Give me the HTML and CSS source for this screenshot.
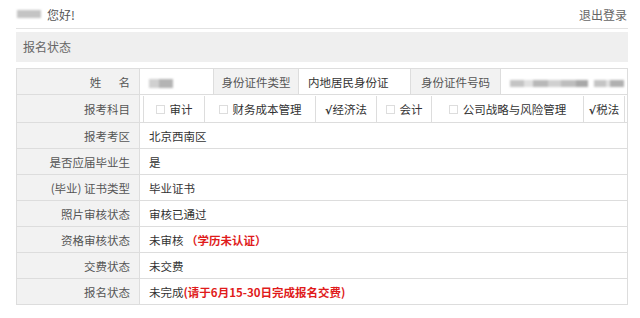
FILE: index.html
```html
<!DOCTYPE html>
<html lang="zh-CN">
<head>
    <meta charset="UTF-8">
    <meta name="viewport" content="width=device-width, initial-scale=1.0">
    <title>报名状态</title>
    <link rel="stylesheet" href="styles.css">
</head>
<body>
   <div class="page">
      <div class="top-bar">
         <div class="greet"><span class="blur-name"></span>您好!</div>
         <a class="logout" href="#">退出登录</a>
      </div>
      <div class="section-title">报名状态</div>
      <table class="info">
         <colgroup>
            <col style="width:123px">
            <col style="width:74px">
            <col style="width:85px">
            <col style="width:112px">
            <col style="width:90px">
            <col>
         </colgroup>
         <tr>
            <th>姓&emsp;&ensp;名</th>
            <td><span class="blur-small"></span></td>
            <th class="mid">身份证件类型</th>
            <td>内地居民身份证</td>
            <th class="mid">身份证件号码</th>
            <td><span class="blur-id"></span></td>
         </tr>
         <tr class="subjects-row">
            <th>报考科目</th>
            <td colspan="5" class="subjects-cell">
               <table class="subjects">
                  <tr>
                     <td style="width:60px"><span class="box"></span>审计</td>
                     <td style="width:110px"><span class="box"></span>财务成本管理</td>
                     <td style="width:60px"><span class="tick">√</span>经济法</td>
                     <td style="width:54px"><span class="box"></span>会计</td>
                     <td style="width:151px"><span class="box"></span>公司战略与风险管理</td>
                     <td><span class="tick">√</span>税法</td>
                  </tr>
               </table>
            </td>
         </tr>
         <tr>
            <th>报考考区</th>
            <td colspan="5">北京西南区</td>
         </tr>
         <tr>
            <th>是否应届毕业生</th>
            <td colspan="5">是</td>
         </tr>
         <tr>
            <th>(毕业) 证书类型</th>
            <td colspan="5">毕业证书</td>
         </tr>
         <tr>
            <th>照片审核状态</th>
            <td colspan="5">审核已通过</td>
         </tr>
         <tr>
            <th>资格审核状态</th>
            <td colspan="5">未审核 <span class="warn">（学历未认证）</span></td>
         </tr>
         <tr>
            <th>交费状态</th>
            <td colspan="5">未交费</td>
         </tr>
         <tr>
            <th>报名状态</th>
            <td colspan="5">未完成<span class="warn">(请于6月15-30日完成报名交费)</span></td>
         </tr>
      </table>
   </div>
</body>
</html>
```

FILE: styles.css
```css
body {
    margin: 0;
    font-family: "Noto Sans CJK SC", "Liberation Sans", sans-serif;
    color: #333;
    background: #fff;
}

.page {
    width: 612px;
    margin-left: 16px;
}

.top-bar {
    height: 28px;
    border-bottom: 1px solid #e2e2e2;
    display: flex;
    justify-content: space-between;
    align-items: center;
    font-size: 12px;
    color: #555;
}

.greet {
    display: flex;
    align-items: center;
    padding-left: 1px;
}

.blur-name {
    display: inline-block;
    width: 24px;
    height: 8px;
    margin-right: 6px;
    background: #c4c4c4;
    filter: blur(1px);
}

.logout {
    color: #666;
    text-decoration: none;
    margin-right: 1px;
}

.section-title {
    margin-top: 3px;
    height: 30px;
    line-height: 30px;
    background: #efefef;
    padding-left: 7px;
    font-size: 12px;
    color: #666;
}

table.info {
    margin-top: 6px;
    width: 612px;
    border-collapse: collapse;
    table-layout: fixed;
    font-size: 11.5px;
    border: 1px solid #ddd;
}

.info th,
.info td {
    border: 1px solid #ddd;
    height: 25px;
    padding: 0;
    white-space: nowrap;
}

.info th {
    background: #f2f2f2;
    font-weight: normal;
    color: #555;
    text-align: right;
    padding-right: 9px;
}

.info th.mid {
    text-align: center;
    padding-right: 0;
}

.info td {
    padding-left: 9px;
}

.subjects-row th {
    height: 27px;
}

.info td.subjects-cell {
    padding: 0 2px 0 3px;
}

table.subjects {
    width: 100%;
    border-collapse: collapse;
    font-size: 11.5px;
}

.subjects td {
    border: 1px solid #ddd;
    border-top: none;
    border-bottom: none;
    height: 26px;
    padding: 0;
    text-align: center;
}

.box {
    display: inline-block;
    width: 7px;
    height: 7px;
    border: 1px solid #ddd;
    margin-right: 5px;
    vertical-align: 0;
}

.tick {
    font-family: "DejaVu Sans", sans-serif;
    font-weight: bold;
    font-size: 11px;
    color: #333;
}

.blur-small {
    display: inline-block;
    width: 24px;
    height: 9px;
    background: linear-gradient(90deg, #d0d0d0 0 40%, #b4b4b4 40% 100%);
    filter: blur(1px);
    vertical-align: middle;
}

.blur-id {
    display: inline-block;
    width: 114px;
    height: 7px;
    background: linear-gradient(90deg, #c4c4c4 0 12%, #e0e0e0 12% 20%, #b8b8b8 20% 33%, #d0d0d0 33% 45%, #bdbdbd 45% 58%, #a8a8a8 58% 68%, #fff 68% 74%, #c4c4c4 74% 84%, #e0e0e0 84% 88%, #b0b0b0 88% 100%);
    filter: blur(1.2px);
    vertical-align: middle;
}

.warn {
    color: #e01b1b;
    font-weight: bold;
}
```
